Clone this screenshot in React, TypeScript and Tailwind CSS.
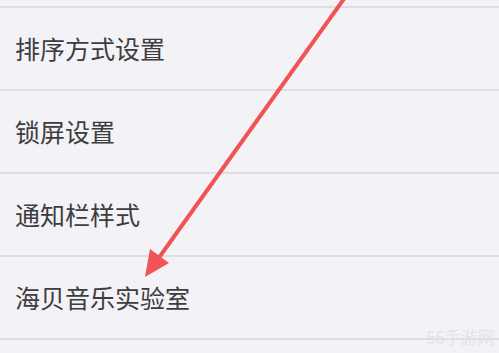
const items = ['排序方式设置', '锁屏设置', '通知栏样式', '海贝音乐实验室'];

export default function App() {
  return (
    <div
      className="relative w-[499px] h-[353px] overflow-hidden bg-[#f3f2f7]"
      style={{ fontFamily: '"Noto Sans CJK SC", "Noto Sans", sans-serif' }}
    >
      <div className="h-[6px]" />
      {items.map((label) => (
        <div
          key={label}
          className="h-[83px] border-t-2 border-[#dedde2] flex items-center pl-[15px]"
        >
          <span className="text-[25px] leading-none text-[#3d3d40]">{label}</span>
        </div>
      ))}
      <div className="border-t-2 border-[#dedde2]" />

      {/* red arrow annotation */}
      <svg
        className="absolute inset-0 pointer-events-none"
        width="499"
        height="353"
        viewBox="0 0 499 353"
      >
        <line x1="346" y1="-4" x2="158" y2="259" stroke="#f05454" strokeWidth="4" strokeLinecap="round" />
        <polygon points="145,277 150,249 169,263" fill="#f05454" />
      </svg>

      <span className="absolute right-[5px] bottom-[4px] text-[17px] text-[#e4e3e8] tracking-tight">
        56手游网
      </span>
    </div>
  );
}
